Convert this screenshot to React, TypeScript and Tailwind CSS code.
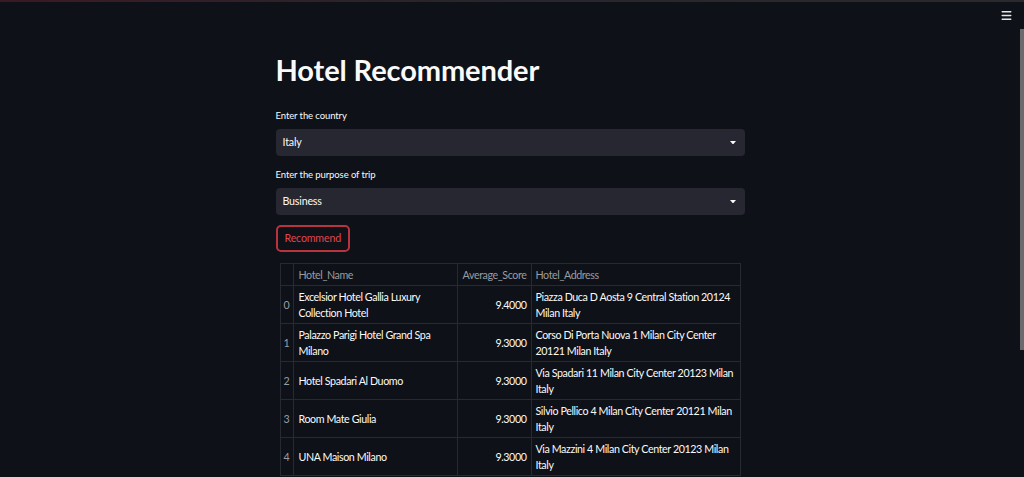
import { Menu } from 'lucide-react';

type Hotel = {
  name: string;
  score: string;
  address: string;
};

const hotels: Hotel[] = [
  {
    name: 'Excelsior Hotel Gallia Luxury Collection Hotel',
    score: '9.4000',
    address: 'Piazza Duca D Aosta 9 Central Station 20124 Milan Italy',
  },
  {
    name: 'Palazzo Parigi Hotel Grand Spa Milano',
    score: '9.3000',
    address: 'Corso Di Porta Nuova 1 Milan City Center 20121 Milan Italy',
  },
  {
    name: 'Hotel Spadari Al Duomo',
    score: '9.3000',
    address: 'Via Spadari 11 Milan City Center 20123 Milan Italy',
  },
  {
    name: 'Room Mate Giulia',
    score: '9.3000',
    address: 'Silvio Pellico 4 Milan City Center 20121 Milan Italy',
  },
  {
    name: 'UNA Maison Milano',
    score: '9.3000',
    address: 'Via Mazzini 4 Milan City Center 20123 Milan Italy',
  },
];

function SelectBox({ label, value }: { label: string; value: string }) {
  return (
    <div className="flex flex-col">
      <label className="text-[9.5px] leading-[13px] tracking-[-0.1px] text-[#fafafa] mb-[7px]">{label}</label>
      <div className="h-[27px] rounded-[4px] bg-[#262730] flex items-center justify-between pl-[7px] pr-[9px]">
        <span className="text-[10.7px] tracking-[-0.2px] text-[#fafafa]">{value}</span>
        <svg width="6" height="3.5" viewBox="0 0 7 4" className="text-[#fafafa]">
          <path d="M0 0h7L3.5 4z" fill="currentColor" />
        </svg>
      </div>
    </div>
  );
}

export default function App() {
  return (
    <div
      className="relative h-[477px] w-[1024px] overflow-hidden bg-[#0e1117] text-[#fafafa]"
      style={{ fontFamily: 'Lato, "Open Sans", sans-serif' }}
    >
      {/* top decoration line */}
      <div className="h-[2px] bg-gradient-to-r from-[#3a1a22] via-[#26262c] to-[#2a2a2e]" />

      <button className="absolute right-[11px] top-[9px] text-[#e6e6e6]" aria-label="menu">
        <Menu className="size-[13px]" strokeWidth={2.5} />
      </button>

      {/* scrollbar thumb */}
      <div className="absolute right-0 top-[29px] h-[321px] w-[4px] bg-[#6a6a6e]" />

      <div className="w-[1020px]">
        <main className="mx-auto w-[469px] pt-[48px]">
          <h1 className="text-[29px] font-bold leading-[40px] tracking-[-0.1px] text-[#fafafa]">
            Hotel Recommender
          </h1>

          <div className="mt-[19px] flex flex-col gap-[12px]">
            <SelectBox label="Enter the country" value="Italy" />
            <SelectBox label="Enter the purpose of trip" value="Business" />
          </div>

          <button className="mt-[10px] h-[27px] rounded-[5px] border-2 border-[#b8333d] px-[7px] text-[10.7px] tracking-[-0.2px] text-[#e0444e]">
            Recommend
          </button>

          <table className="ml-[4px] mt-[11px] w-[460px] table-fixed border-collapse text-[10.7px] leading-[16px] tracking-[-0.4px]">
            <colgroup>
              <col className="w-[13px]" />
              <col className="w-[164px]" />
              <col className="w-[74px]" />
              <col className="w-[209px]" />
            </colgroup>
            <thead>
              <tr className="h-[22px] text-[#9a9ca2]">
                <th className="border border-[#262a32]" />
                <th className="border border-[#262a32] px-[5px] text-left font-normal">Hotel_Name</th>
                <th className="border border-[#262a32] px-[4px] text-right font-normal">Average_Score</th>
                <th className="border border-[#262a32] px-[4px] text-left font-normal">Hotel_Address</th>
              </tr>
            </thead>
            <tbody>
              {hotels.map((h, i) => (
                <tr key={h.name} className="h-[38px]">
                  <td className="border border-[#262a32] text-center text-[#9a9ca2] tracking-normal">{i}</td>
                  <td className="border border-[#262a32] px-[5px] py-[2.5px]">{h.name}</td>
                  <td className="border border-[#262a32] px-[4px] text-right">{h.score}</td>
                  <td className="border border-[#262a32] px-[4px] py-[2.5px]">{h.address}</td>
                </tr>
              ))}
            </tbody>
          </table>
        </main>
      </div>
    </div>
  );
}
